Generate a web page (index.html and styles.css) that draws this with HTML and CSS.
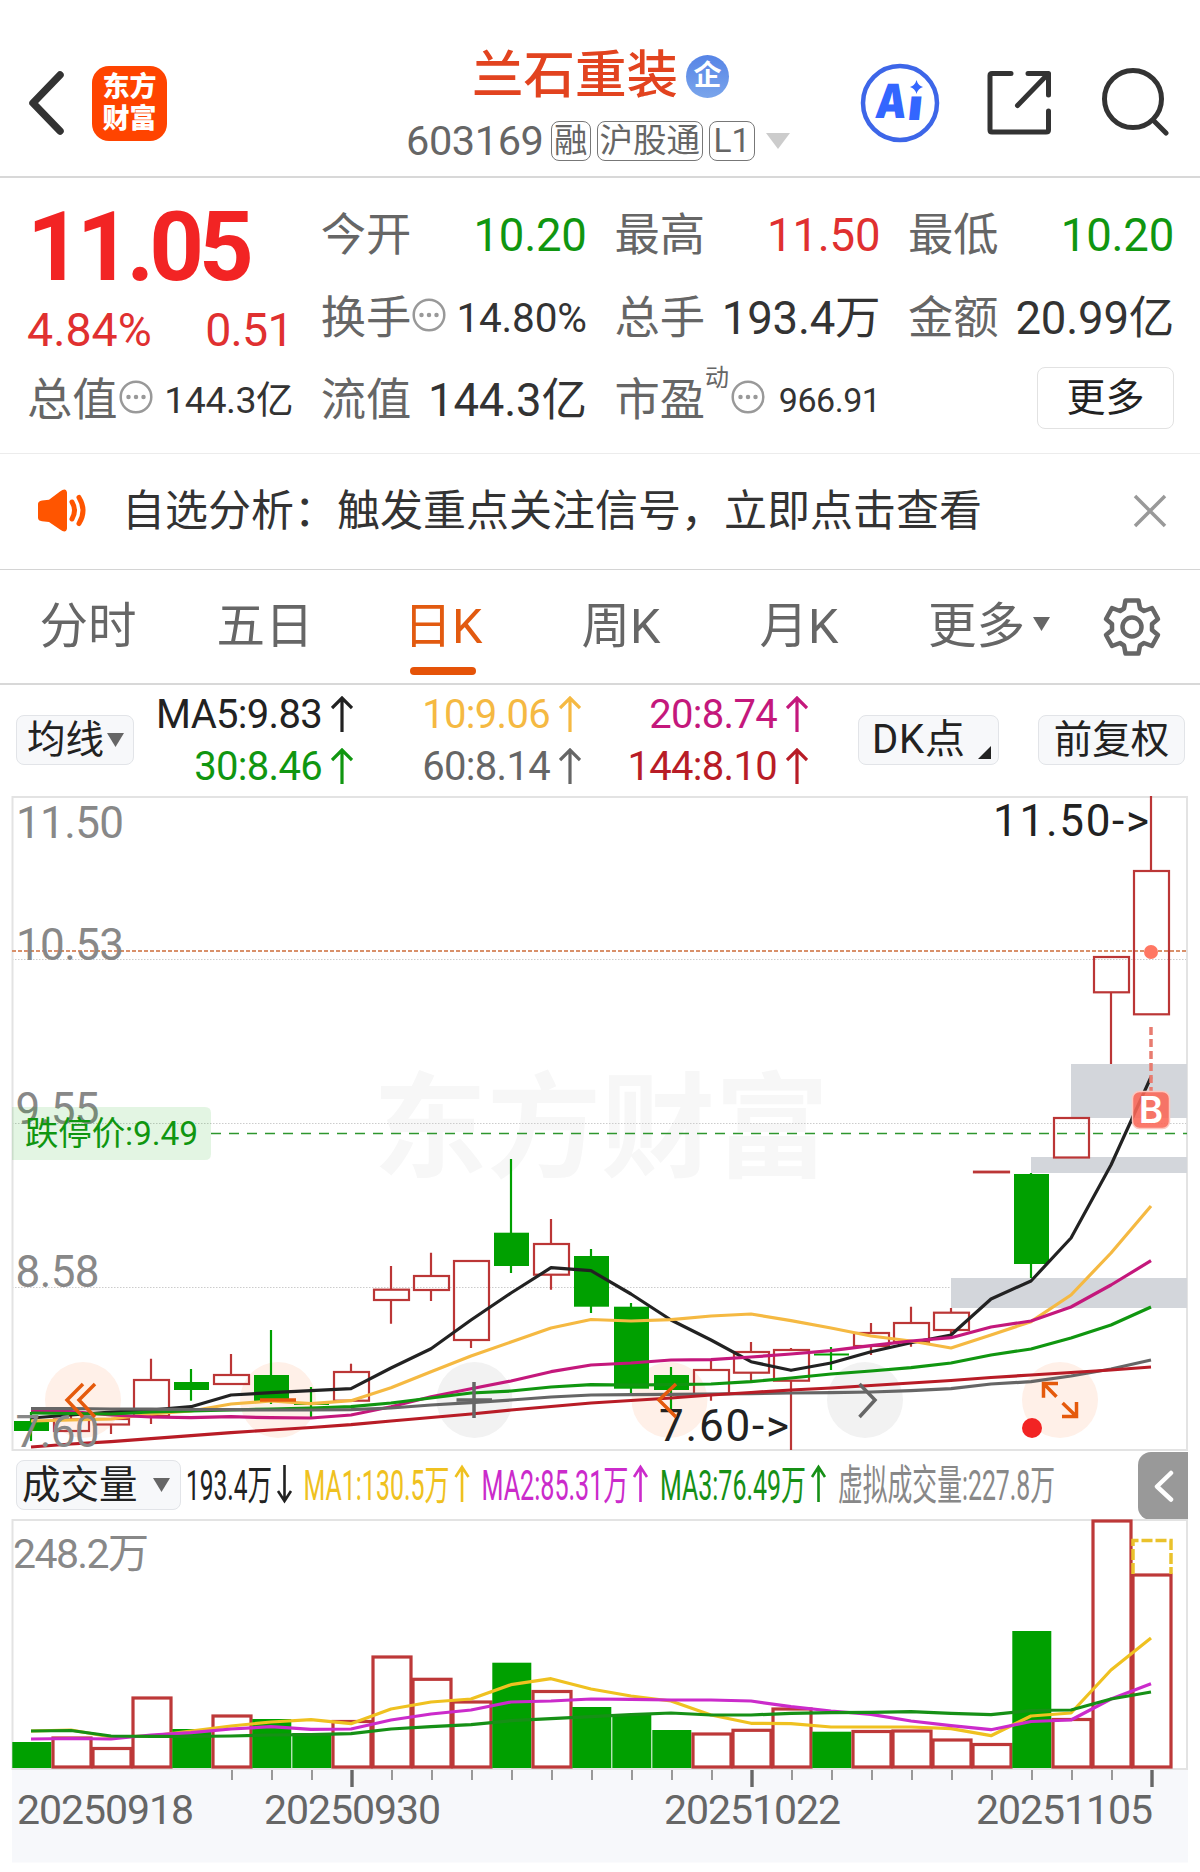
FILE: index.html
```html
<!DOCTYPE html>
<html lang="zh-CN">
<head>
<meta charset="utf-8">
<title>兰石重装 603169</title>
<link rel="stylesheet" href="styles.css">
</head>
<body>
<header class="topbar">
  <svg class="back" width="40" height="68" viewBox="0 0 40 68"><path d="M34 6 7 34 34 62"/></svg>
  <div class="logo"><span>东方</span><span>财富</span></div>
  <div class="stock">
    <div class="stock-name"><span>兰石重装</span><i class="corp">企</i></div>
    <div class="stock-code"><span class="code">603169</span><span class="tag">融</span><span class="tag">沪股通</span><span class="tag">L1</span><svg class="caret" width="24" height="16" viewBox="0 0 24 16"><path d="M0 0h24L12 16z"/></svg></div>
  </div>
  <svg class="ai" width="80" height="80" viewBox="0 0 80 80">
    <circle cx="40" cy="40" r="37"/>
    <g transform="translate(5.500 0) skewX(-6)">
      <text class="ai-a" x="14.500" y="55.500" textLength="31" lengthAdjust="spacingAndGlyphs">A</text>
      <text class="ai-i" x="47" y="57.500" textLength="15" lengthAdjust="spacingAndGlyphs">ı</text>
    </g>
    <path d="M56.500 17q1.500 5.500 6.500 7-5 1.500-6.500 7-1.500-5.500-6.500-7 5-1.500 6.500-7z"/>
  </svg>
  <svg class="line-icon share" width="68" height="68" viewBox="0 0 68 68"><path d="M26 5.500H7q-2 0-2 2V62q0 2 2 2H61q2.500 0 2.500-2V43M43 5.500H63.500V27M32.500 37.500 63 6"/></svg>
  <svg class="line-icon search" width="68" height="68" viewBox="0 0 68 68"><circle cx="32" cy="31" r="28.500"/><path d="M52 52 65 65"/></svg>
</header>

<section class="quote">
  <div class="price-cell">
    <div class="price">11.05</div>
    <div class="change"><span>4.84%</span><span>0.51</span></div>
  </div>
  <div class="cell"><span>今开</span><b class="down">10.20</b></div>
  <div class="cell"><span>最高</span><b class="up">11.50</b></div>
  <div class="cell"><span>最低</span><b class="down">10.20</b></div>
  <div class="cell"><span>换手</span><svg class="dots" viewBox="0 0 34 34"><circle cx="17" cy="17" r="15.300"/><path d="M9.500 17h0M17 17h0M24.500 17h0"/></svg><b class="mid">14.80%</b></div>
  <div class="cell"><span>总手</span><b>193.4万</b></div>
  <div class="cell"><span>金额</span><b>20.99亿</b></div>
  <div class="cell"><span>总值</span><svg class="dots" viewBox="0 0 34 34"><circle cx="17" cy="17" r="15.300"/><path d="M9.500 17h0M17 17h0M24.500 17h0"/></svg><b class="small">144.3亿</b></div>
  <div class="cell"><span>流值</span><b>144.3亿</b></div>
  <div class="cell"><span>市盈</span><sup>动</sup><svg class="dots" viewBox="0 0 34 34"><circle cx="17" cy="17" r="15.300"/><path d="M9.500 17h0M17 17h0M24.500 17h0"/></svg><b class="tiny">966.91</b></div>
  <div class="cell"><button class="more">更多</button></div>
</section>

<section class="notice">
  <svg class="horn" width="50" height="46" viewBox="0 0 50 46"><path class="cone" d="M1 16q0-3 4-3.500l7-.8L23 3.500q6-4.500 7 1v36q-1 5.500-7 1L12 34l-7-.8q-4-.5-4-3.500z"/><path class="wave" d="M35 14q5 8.500 0 17M42 9.500q8 13 0 26"/></svg>
  <p>自选分析：触发重点关注信号，立即点击查看</p>
  <svg class="close" width="34" height="34" viewBox="0 0 34 34"><path d="M2 2 32 32M32 2 2 32"/></svg>
</section>

<nav class="tabs">
  <a>分时</a><a>五日</a><a class="active">日K</a><a>周K</a><a>月K</a>
  <a>更多<svg class="mini" width="17" height="14" viewBox="0 0 17 14"><path d="M0 0h17L8.500 14z"/></svg></a>
  <svg class="gear" width="60" height="60" viewBox="-30 -30 60 60"><path d="M-6.500-26.500H6.500L8-18.500 12-16 20-19 26-8 20-3V3L26 8 20 19 12 16 8 18.500 6.500 26.500H-6.500L-8 18.500-12 16-20 19-26 8-20 3V-3L-26-8-20-19-12-16-8-18.500Z"/><circle r="9.500"/></svg>
</nav>

<section class="ma-bar">
  <button class="chip chip-ma">均线<svg class="mini" width="17" height="14" viewBox="0 0 17 14"><path d="M0 0h17L8.500 14z"/></svg></button>
  <div class="ma-values">
    <span class="m5">MA5:9.83<svg class="arrow" viewBox="0 0 22 36"><path d="M11 36V2M1 12 11 2 21 12"/></svg></span>
    <span class="m10">10:9.06<svg class="arrow" viewBox="0 0 22 36"><path d="M11 36V2M1 12 11 2 21 12"/></svg></span>
    <span class="m20">20:8.74<svg class="arrow" viewBox="0 0 22 36"><path d="M11 36V2M1 12 11 2 21 12"/></svg></span>
    <span class="m30">30:8.46<svg class="arrow" viewBox="0 0 22 36"><path d="M11 36V2M1 12 11 2 21 12"/></svg></span>
    <span class="m60">60:8.14<svg class="arrow" viewBox="0 0 22 36"><path d="M11 36V2M1 12 11 2 21 12"/></svg></span>
    <span class="m144">144:8.10<svg class="arrow" viewBox="0 0 22 36"><path d="M11 36V2M1 12 11 2 21 12"/></svg></span>
  </div>
  <button class="chip chip-dk">DK点<svg class="corner" width="13" height="13" viewBox="0 0 13 13"><path d="M13 0V13H0z"/></svg></button>
  <button class="chip chip-fq">前复权</button>
</section>

<svg class="kline" width="1200" height="655" viewBox="0 796 1200 655">
  <g class="watermark"><text x="373" y="1168" textLength="456">东方财富</text></g>
  <path class="grid" d="M12 959.500H1187M12 1123.500H1187M12 1287.500H1187"/>
  <rect class="frame" x="12.500" y="797" width="1174.500" height="653"/>
  <path class="gap" d="M1071 1064H1187V1118H1071zM1031 1157H1187V1173H1031zM951 1278H1187V1308H951z"/>
  <g class="nav-bg"><circle cx="83" cy="1400" r="38"/><circle cx="278" cy="1400" r="38"/><circle class="g" cx="474.500" cy="1400" r="38"/><circle cx="669.500" cy="1400" r="38"/><circle class="g" cx="865" cy="1400" r="38"/><circle cx="1060" cy="1400" r="38"/></g>
  <path class="last" d="M12 951H1187"/>
  <path class="limit" d="M211 1133.500H1187"/>
  <g id="candles"></g>
  <g id="averages"></g>
  <g class="scale">
    <text x="16" y="838" textLength="108">11.50</text>
    <text x="16" y="960" textLength="108">10.53</text>
    <text x="15.500" y="1124" textLength="84">9.55</text>
    <text x="15.500" y="1287" textLength="84">8.58</text>
    <text x="15.500" y="1447" textLength="84">7.60</text>
  </g>
  <path class="limit-tag" d="M12 1107H205q6 0 6 6V1154q0 6-6 6H12z"/>
  <text class="limit-text" x="25" y="1145" textLength="173">跌停价:9.49</text>
  <text class="mark" x="993" y="836" textLength="156">11.50-&gt;</text>
  <text class="mark" x="659" y="1441" textLength="130">7.60-&gt;</text>
  <g class="nav-icon">
    <path d="M83 1384 67 1400 83 1417M95 1384 79 1400 95 1417M260 1400H296M676 1384 659 1400 676 1417"/>
    <path class="g" d="M456.500 1400H492M474 1382V1418M859.500 1384 875 1400 859.500 1417"/>
    <path d="M1058 1383.500H1043.500V1397.700M1044 1384 1056.500 1396.700M1062 1416.500H1076.500V1402M1076 1416 1062.600 1403"/>
  </g>
  <circle class="alert" cx="1032" cy="1428" r="10"/>
  <path class="buy-line" d="M1151 1027V1091"/>
  <circle class="buy-dot" cx="1151" cy="952" r="7"/>
  <rect class="buy" x="1132.500" y="1091.500" width="37" height="37" rx="7"/>
  <text class="buy-b" x="1151" y="1123" text-anchor="middle">B</text>
</svg>

<section class="vol-head">
  <button class="chip chip-vol">成交量<svg class="mini" width="17" height="14" viewBox="0 0 17 14"><path d="M0 0h17L8.500 14z"/></svg></button>
  <svg class="legend" width="880" height="68" viewBox="186 1451 880 68">
    <g class="m5"><text x="186" y="1500" textLength="86" lengthAdjust="spacingAndGlyphs">193.4万</text><path d="M284.500 1465V1501M278 1491 284.500 1501 291 1491"/></g>
    <g class="v1"><text x="303.500" y="1500" textLength="146" lengthAdjust="spacingAndGlyphs">MA1:130.5万</text><path d="M462 1502V1467M455.500 1477 462 1467 468.500 1477"/></g>
    <g class="v2"><text x="481.500" y="1500" textLength="147" lengthAdjust="spacingAndGlyphs">MA2:85.31万</text><path d="M640.500 1502V1467M634 1477 640.500 1467 647 1477"/></g>
    <g class="v3"><text x="660" y="1500" textLength="146" lengthAdjust="spacingAndGlyphs">MA3:76.49万</text><path d="M818.500 1502V1467M812 1477 818.500 1467 825 1477"/></g>
    <g class="v4"><text x="838" y="1500" textLength="217" lengthAdjust="spacingAndGlyphs">虚拟成交量:227.8万</text></g>
  </svg>
  <button class="drawer"><svg width="20" height="32" viewBox="0 0 20 32"><path d="M17 3 3 16.500 17 29.500"/></svg></button>
</section>

<svg class="volume" width="1200" height="353" viewBox="0 1519 1200 353">
  <rect class="axis-bg" x="12" y="1770" width="1176" height="92.500"/>
  <rect class="frame" x="12.500" y="1520" width="1174.500" height="249"/>
  <g id="bars"></g>
  <path class="virtual" d="M1133 1574V1540.500H1171V1574"/>
  <g id="volume-averages"></g>
  <g id="ticks"></g>
  <text class="vol-max" x="13" y="1568" textLength="136">248.2万</text>
  <g class="dates">
    <text x="17" y="1824" textLength="177">20250918</text>
    <text x="264" y="1824" textLength="177">20250930</text>
    <text x="664" y="1824" textLength="177">20251022</text>
    <text x="976" y="1824" textLength="177">20251105</text>
  </g>
</svg>
<script src="chart.js"></script>
</body>
</html>
```
FILE: styles.css
```css
* { box-sizing: border-box; }
body {
  margin: 0;
  width: 1200px;
  height: 1872px;
  overflow: hidden;
  background: #fff;
  color: #333;
  font-family: Roboto, "Noto Sans CJK SC", sans-serif;
}
svg { display: block; flex: none; fill: none; }
button { font-family: inherit; padding: 0; margin: 0; color: #222; }

/* header */
.topbar {
  display: flex;
  height: 178px;
  padding: 28px 31px 0 25px;
  border-bottom: 2px solid #d8d8d8;
}
.back { margin: 41px 26px 0 1px; stroke: #333; stroke-width: 7.500; stroke-linecap: round; stroke-linejoin: round; }
.logo {
  width: 75px; height: 75px; margin-top: 38px; padding-top: 5px;
  display: flex; flex-direction: column; align-items: center;
  border-radius: 17px; background: #ff4400; color: #fff;
  font-size: 27px; font-weight: 900; line-height: 32px;
}
.stock { width: 400px; margin-left: 234px; padding-top: 17px; }
.stock-name { display: flex; align-items: center; height: 62px; padding-left: 71px; color: #e2431f; font-size: 51.500px; line-height: 62px; font-weight: 500; }
.corp {
  width: 43px; height: 43px; margin-left: 8px; border-radius: 50%;
  background: linear-gradient(#5684e6, #7aa5eb); color: #fff;
  font-size: 28px; line-height: 41px; text-align: center; font-weight: 700; font-style: normal;
}
.stock-code { display: flex; align-items: center; gap: 6px; height: 40px; margin-top: 14px; padding-left: 5px; color: #666; }
.code { width: 140px; margin-right: -1px; font-size: 41.500px; letter-spacing: -.4px; line-height: 40px; }
.tag { height: 40px; padding: 0 2px; border: 1.500px solid #777; border-radius: 8px; font-size: 33.500px; line-height: 38px; }
.tag:nth-child(4) { width: 46px; text-align: center; }
.caret { margin-left: 5px; fill: #ccc; }
.ai { margin: 35px 0 0 59px; }
.ai circle { stroke: #3d66e8; stroke-width: 4.500; }
.ai path, .ai text { fill: #3366ff; }
.ai text { font-family: Inter, Roboto, sans-serif; font-weight: 900; font-size: 47px; }
.ai .ai-i { font-size: 43px; }
.line-icon { stroke: #333; stroke-width: 5; stroke-linecap: round; stroke-linejoin: round; }
.share { margin: 40px 0 0 45px; }
.search { margin: 40px 0 0 48px; }

/* quote */
.quote {
  display: grid;
  grid-template-columns: repeat(4, 266px);
  grid-template-rows: repeat(3, 83px);
  column-gap: 27.700px;
  height: 276px;
  padding: 16px 0 0 27px;
  border-bottom: 1.500px solid #ececec;
}
.price-cell { grid-row: span 2; color: #e03030; }
.price { height: 107px; margin-top: -1px; font-size: 95.500px; line-height: 108px; font-weight: 700; letter-spacing: -5px; color: #f22424; }
.change { display: flex; justify-content: space-between; font-size: 46.500px; line-height: 60px; }
.change span:last-child { letter-spacing: -.7px; }
.cell { display: flex; align-items: center; color: #666; font-size: 45.300px; line-height: 83px; }
.cell:nth-child(n+8) { line-height: 81px; padding-bottom: 2px; }
.cell b { margin-left: auto; color: #333; font-weight: 400; font-size: 45.500px; letter-spacing: -.2px; white-space: nowrap; }
.cell b.up { color: #e03030; }
.cell b.down { color: #109610; }
.cell b.mid { font-size: 40.500px; }
.cell b.small { font-size: 37.500px; letter-spacing: -.5px; }
.cell b.tiny { font-size: 34px; letter-spacing: -.5px; }
.dots { width: 34px; height: 34px; margin: -7px 0 0 1px; stroke: #999; stroke-width: 2.500; }
.dots path { stroke-width: 4.500; stroke-linecap: round; }
.cell sup { align-self: flex-start; font-size: 24px; line-height: 37px; }
.cell sup + .dots { margin-left: 2px; }
.more { width: 137px; height: 62px; margin-left: auto; border: 1.500px solid #e2e2e2; border-radius: 8px; background: #fff; font-size: 39px; line-height: 56px; margin-top: -5px; }

/* notice */
.notice { display: flex; align-items: center; height: 116px; padding: 0 33px 2px 37px; border-bottom: 1.500px solid #d4d4d4; }
.horn .cone { fill: #ff5500; }
.horn .wave { stroke: #ff5500; stroke-width: 5; stroke-linecap: round; }
.notice p { flex: 1; margin: 0 0 0 35px; font-size: 43px; line-height: 60px; white-space: nowrap; }
.close { stroke: #999; stroke-width: 3.500; }

/* period tabs */
.tabs { display: grid; grid-template-columns: 176px repeat(4, 178px) 202px 84px; height: 115px; border-bottom: 2px solid #d8d8d8; color: #666; font-size: 48.500px; line-height: 119px; }
.tabs a { position: relative; display: flex; align-items: center; justify-content: center; }
.tabs .active { color: #e25a10; }
.tabs .active::after { content: ""; position: absolute; left: 56px; bottom: 9px; width: 66px; height: 8px; border-radius: 4px; background: #e55308; }
.tabs a { height: 113px; }
.tabs .active::after { bottom: 8px; }
.mini { fill: #666; }
.tabs .mini { margin: -6px 0 0 8px; }
.gear { margin: 27px 0 0 12px; stroke: #666; stroke-width: 4.500; stroke-linejoin: round; }

/* moving averages */
.ma-bar { display: flex; height: 111px; padding: 30px 15px 0 16px; }
.chip { display: flex; align-items: center; height: 50px; border: 1.500px solid #e2e4e8; border-radius: 8px; background: #f7f8fa; font-size: 38.500px; line-height: 46px; white-space: nowrap; }
.chip-ma { width: 118px; padding-left: 10px; }
.chip-ma .mini { margin-left: 3px; }
.ma-values { display: grid; grid-template-columns: 210px 228px 227px; grid-template-rows: 52px 52px; margin: -26px 50px 0 9px; font-size: 40px; letter-spacing: -.7px; line-height: 52px; }
.ma-values span { display: flex; justify-content: flex-end; }
.arrow { width: 22px; height: 36px; margin: 7px 0 0 9px; stroke: currentColor; stroke-width: 3.200; }
.m5 { color: #222; }
.m10 { color: #f5b942; }
.m20 { color: #c4187c; }
.m30 { color: #109610; }
.m60 { color: #666; }
.m144 { color: #b81c26; }
.chip-dk { width: 141px; padding: 0 7px 0 13px; font-size: 40px; letter-spacing: .8px; }
.corner { margin: 24px 0 0 auto; fill: #222; }
.chip-fq { width: 147px; margin-left: 39px; justify-content: center; }

/* candlestick chart */
.frame { stroke: #e3e3e3; stroke-width: 2; }
.grid { stroke: #ccc; stroke-width: 1; stroke-dasharray: 1.500 1.500; }
.watermark { fill: #f7f7f7; font-size: 114px; font-weight: 700; }
.gap { fill: #d3d6db; }
.nav-bg { fill: #fff0e8; }
.nav-bg .g { fill: #f2f2f2; }
.last { stroke: #d9906a; stroke-width: 2; stroke-dasharray: 4 2; }
.limit { stroke: #2e962e; stroke-width: 1.500; stroke-dasharray: 10 8; }
.up-line { stroke: #bb3636; stroke-width: 2.200; }
.down-line { stroke: #00a000; stroke-width: 2.200; }
.down-fill { fill: #00a000; }
.curve { stroke-width: 3.200; stroke-linejoin: round; stroke: currentColor; }
.scale { fill: #888; font-size: 44px; }
.limit-tag { fill: #00a000; fill-opacity: .11; }
.limit-text { fill: #109610; font-size: 33.500px; }
.mark { fill: #222; font-size: 44px; }
.nav-icon { stroke: #e55a0c; stroke-width: 3.500; }
.nav-icon .g { stroke: #666; }
.alert { fill: #f22424; }
.buy-line { stroke: #e87c70; stroke-width: 3.500; stroke-dasharray: 8 4; }
.buy-dot { fill: #ff7763; }
.buy { fill: #fa6656; fill-opacity: .88; stroke: #fcc8c0; stroke-width: 1.500; }
.buy-b { fill: #fff; font-size: 37px; font-weight: 600; font-family: Inter, sans-serif; }

/* volume */
.vol-head { display: flex; height: 68px; padding: 9px 12px 0 16px; }
.chip-vol { width: 165px; padding-left: 5px; flex: none; }
.chip-vol .mini { margin-left: 15px; }
.legend { margin: -9px 0 0 5px; font-size: 42px; }
.legend text { fill: currentColor; }
.legend path { stroke: currentColor; stroke-width: 2.600; }
.v1 { color: #efc120; }
.v2 { color: #cb2bcb; }
.v3 { color: #169016; }
.v4 { color: #888; }
.drawer { width: 50px; height: 68px; margin: -8px 0 0 auto; padding: 0 0 0 16px; border: 0; border-radius: 13px 0 0 13px; background: #999; }
.drawer path { stroke: #fff; stroke-width: 4.500; stroke-linecap: round; stroke-linejoin: round; }
.axis-bg { fill: #f7f8fb; }
.bar-up { stroke: #bd3838; stroke-width: 3.200; fill: #fff; }
.virtual { stroke: #eac22c; stroke-width: 3.500; stroke-dasharray: 11 3; }
.tick { stroke: #888; stroke-width: 1.700; }
.tick-major { stroke: #666; stroke-width: 3.400; }
.vol-max { fill: #888; font-size: 41px; }
.dates { fill: #666; font-size: 41px; }
```
FILE: chart.js
```js
const NS = 'http://www.w3.org/2000/svg';
const cx = i => 31 + 40 * i;

function add(parent, tag, attrs) {
  const el = document.createElementNS(NS, tag);
  for (const k in attrs) el.setAttribute(k, attrs[k]);
  document.getElementById(parent).appendChild(el);
}

// direction, body top, body bottom, wick top, wick bottom
const candles = [
  ['d', 1421, 1431, 1412, 1441], ['u', 1419.5, 1431, 1415, 1431], ['u', 1419, 1424.5, 1419, 1434],
  ['u', 1380, 1416, 1358.7, 1424], ['d', 1382, 1390, 1369, 1400.7], ['u', 1375, 1384, 1354, 1384],
  ['d', 1375, 1401.5, 1330, 1404], ['d', 1403, 1405, 1387, 1417], ['u', 1372, 1400.7, 1363.7, 1400.7],
  ['u', 1289.7, 1300, 1266, 1323.7], ['u', 1276, 1290, 1252.7, 1301], ['u', 1261, 1340, 1261, 1348],
  ['d', 1232.7, 1266, 1159, 1273], ['u', 1244, 1274.7, 1219, 1289.7], ['d', 1256, 1306.7, 1249, 1313],
  ['d', 1306.7, 1388.7, 1303, 1394], ['d', 1375, 1390, 1367, 1410], ['u', 1370, 1394, 1360, 1400.7],
  ['u', 1352, 1372.7, 1342, 1381.7], ['u', 1350, 1380.7, 1348, 1450], ['d', 1353.5, 1355.5, 1347, 1370],
  ['u', 1333, 1346, 1323, 1355], ['u', 1323, 1342, 1306.7, 1346.7], ['u', 1312.7, 1330, 1308, 1335],
  ['u', 1171.7, 1172.3, 1172, 1172], ['d', 1174, 1264, 1173, 1278], ['u', 1118, 1157.5, 1118, 1157],
  ['u', 957, 992.3, 957, 1064], ['u', 871, 1014.3, 796, 1014]
];
candles.forEach(([dir, top, bottom, high, low], i) => {
  const x = cx(i);
  if (dir === 'd') {
    add('candles', 'path', { class: 'down-line', d: `M${x} ${high}V${low}` });
    add('candles', 'rect', { class: 'down-fill', x: x - 17, y: top, width: 35, height: bottom - top });
  } else {
    add('candles', 'path', { class: 'up-line', d: `M${x} ${high}V${top}M${x} ${bottom}V${low}` });
    add('candles', 'rect', { class: 'up-line', x: x - 17, y: top, width: 35, height: bottom - top });
  }
});

function curve(parent, cls, ys) {
  const points = ys.map((y, i) => `${cx(i)},${y}`).join(' ');
  add(parent, 'polyline', { class: 'curve ' + cls, points });
}
curve('averages', 'm5', [1418, 1415, 1412, 1410, 1406.7, 1395, 1392.7, 1390.7, 1388.7, 1368, 1348.7, 1320, 1293, 1267.7, 1270.7, 1294, 1320, 1340, 1361.7, 1370.3, 1363, 1351.7, 1342.7, 1335, 1299, 1281, 1238, 1165, 1077]);
curve('averages', 'm10', [1421, 1420, 1419, 1414, 1411, 1404, 1401, 1403.7, 1400.7, 1387.7, 1371.7, 1356, 1342, 1328, 1319.5, 1321, 1319.7, 1316, 1314, 1320.7, 1328, 1336, 1341, 1348, 1335, 1321.7, 1295, 1253, 1206]);
curve('averages', 'm20', [1411, 1411.5, 1415, 1417, 1417.7, 1416.7, 1417.7, 1418, 1415, 1406.7, 1396.7, 1388.7, 1381, 1371.7, 1365, 1363, 1360, 1359.7, 1357, 1354, 1350.7, 1345.7, 1341, 1337.7, 1327, 1321, 1307, 1285, 1260.7]);
curve('averages', 'm30', [1413, 1413.5, 1414, 1412, 1411, 1410, 1409, 1408, 1406.7, 1403, 1398, 1393, 1391, 1387, 1384.7, 1385, 1384.7, 1384, 1381.7, 1378, 1374, 1371, 1367.7, 1363, 1355, 1349, 1338, 1325, 1307]);
curve('averages', 'm60', [1408.5, 1408.7, 1409, 1409.2, 1409.5, 1409.7, 1410, 1410, 1409.7, 1408, 1405, 1402.7, 1400, 1397, 1395, 1394.7, 1394.3, 1394, 1393.7, 1393, 1392.7, 1392, 1390.7, 1388.7, 1384, 1381.7, 1376, 1369, 1360]);
curve('averages', 'm144', [1447, 1444, 1441.7, 1438.7, 1435.7, 1432.7, 1430, 1427.5, 1424.7, 1421, 1417.5, 1414, 1410, 1406.5, 1403, 1400.5, 1398, 1395, 1392.5, 1390, 1388, 1385.5, 1383, 1380.5, 1377.5, 1375, 1372.5, 1370, 1367]);

const volumes = [
  ['d', 1742], ['u', 1738], ['u', 1748.5], ['u', 1698], ['d', 1729], ['u', 1716], ['d', 1719], ['d', 1733],
  ['u', 1721.5], ['u', 1657], ['u', 1679.3], ['u', 1702], ['d', 1662.7], ['u', 1691.5], ['d', 1707], ['d', 1714],
  ['d', 1730], ['u', 1734], ['u', 1730.3], ['u', 1709], ['d', 1731.7], ['u', 1731.5], ['u', 1731], ['u', 1740],
  ['u', 1744.5], ['d', 1631], ['u', 1719.5], ['u', 1521], ['u', 1575]
];
volumes.forEach(([dir, y], i) => {
  const x = cx(i);
  if (dir === 'd') add('bars', 'rect', { class: 'down-fill', x: x - 18.7, y, width: 39, height: 1768 - y });
  else add('bars', 'rect', { class: 'bar-up', x: x - 18, y, width: 38, height: 1767 - y });
});

curve('volume-averages', 'v1', [1731, 1730, 1737, 1736, 1731, 1726, 1722, 1719.7, 1723.7, 1709, 1702, 1699, 1684.7, 1678.7, 1689, 1696, 1701, 1715, 1723.3, 1723.7, 1727, 1727, 1727, 1728.7, 1735.7, 1716, 1713, 1670, 1638]);
curve('volume-averages', 'v2', [1739, 1738.5, 1739, 1735, 1732.7, 1729, 1726.7, 1729.3, 1729, 1720, 1714, 1710, 1702, 1701, 1699, 1699.3, 1700, 1700, 1701, 1706.7, 1711, 1714.3, 1721, 1725.7, 1729.7, 1721.5, 1720, 1699, 1683.7]);
curve('volume-averages', 'v3', [1731, 1730.5, 1736, 1736.3, 1736.5, 1736, 1735, 1734.7, 1733.7, 1729, 1726.7, 1724.7, 1720.7, 1718.7, 1716.7, 1714.7, 1713, 1715, 1715, 1713.3, 1712.7, 1712.3, 1711.7, 1713.3, 1714.7, 1710.5, 1710, 1699, 1692]);

for (let i = 5; i < 29; i++) {
  const major = i % 10 === 8;
  add('ticks', 'path', { class: major ? 'tick-major' : 'tick', d: `M${cx(i) + 1} 1770V${major ? 1787 : 1780}` });
}
```
